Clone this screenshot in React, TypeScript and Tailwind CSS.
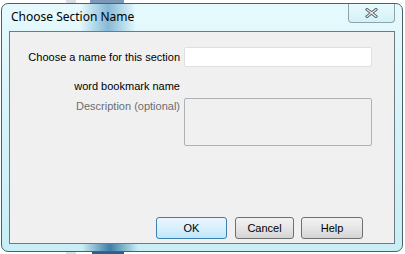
import React from "react";

const btnBase =
  "h-[22px] rounded-[3px] border text-[11px] text-black flex items-center justify-center";

export default function App() {
  return (
    <div
      className="w-[405px] h-[254px] bg-white overflow-hidden relative"
      style={{ fontFamily: '"Liberation Sans", Arial, sans-serif' }}
    >
      {/* background items behind window */}
      <div className="absolute left-[66px] top-0 w-[10px] h-[4px] bg-[#d8dde2]" />
      <div className="absolute left-[90px] top-0 w-[34px] h-[4px] bg-[#7d98b8]" />
      <div className="absolute left-[66px] bottom-0 w-[10px] h-[3px] bg-[#d8dde2]" />
      <div className="absolute left-[92px] bottom-0 w-[32px] h-[3px] bg-[#2f5f86]" />

      <div className="absolute left-[1px] top-[3px] w-[402px] h-[249px] rounded-[7px] border border-[#4f5f66] bg-gradient-to-b from-[#e6fafd] via-[#d4f3f9] to-[#c8eef6] overflow-hidden flex flex-col">
        {/* glass highlight */}
        <div className="absolute left-[78px] top-0 w-[56px] h-[30px] bg-gradient-to-r from-transparent via-[#86b9d6] to-transparent" />
        <div className="absolute left-[80px] bottom-0 w-[56px] h-[8px] bg-gradient-to-r from-transparent via-[#3f7fa6] to-transparent" />

        {/* title bar */}
        <div className="relative h-[27px] flex items-start">
          <span
            className="ml-[9px] mt-[5px] text-[12px] text-black leading-[16px]"
            style={{ fontFamily: '"Noto Sans", "Open Sans", sans-serif' }}
          >
            Choose Section Name
          </span>
          <div className="ml-auto mr-[7px] w-[47px] h-[20px] -mt-[1px] rounded-b-[4px] border border-[#8fa3ab] border-t-0 bg-gradient-to-b from-[#e9fbfd] to-[#d2f1f8] flex items-center justify-center">
            <svg width="13" height="10" viewBox="0 0 13 10">
              <path
                d="M2 1.5 L11 8.5 M11 1.5 L2 8.5"
                stroke="#5d6268"
                strokeWidth="3"
                strokeLinecap="square"
              />
              <path
                d="M2 1.5 L11 8.5 M11 1.5 L2 8.5"
                stroke="#f4f6f8"
                strokeWidth="1.1"
                strokeLinecap="square"
              />
            </svg>
          </div>
        </div>

        {/* client area */}
        <div className="relative mx-[7px] mb-[7px] flex-1 bg-[#f0f0f0] border border-[#6f7a7e] flex flex-col">
          <div className="flex mt-[15px] items-center">
            <div className="w-[173px] text-right text-[11px] text-black pr-[3px]">
              Choose a name for this section
            </div>
            <div className="w-[188px] h-[20px] bg-white border border-[#dcdfe3] rounded-[2px] ml-[1px]" />
          </div>
          <div className="flex mt-[13px]">
            <div className="w-[173px] text-right text-[11px] text-black pr-[3px] leading-[13px]">
              word bookmark name
            </div>
          </div>
          <div className="flex mt-[5px]">
            <div className="w-[173px] text-right text-[11px] text-[#6d6d6d] pr-[3px] leading-[13px] pt-[2px]">
              Description (optional)
            </div>
            <div className="w-[188px] h-[48px] bg-[#f0f0f0] border border-[#adb2b5] rounded-[2px] ml-[1px]" />
          </div>
          <div className="flex-1" />
          <div className="flex mb-[4px] ml-[146px]">
            <div
              className={`${btnBase} w-[71px] border-[#3c7fb1] bg-gradient-to-b from-[#eaf6fd] via-[#d9f0fc] to-[#bee6fd]`}
            >
              OK
            </div>
            <div
              className={`${btnBase} ml-[8px] w-[59px] border-[#707070] bg-gradient-to-b from-[#f2f2f2] via-[#e6e6e6] to-[#d4d4d4]`}
            >
              Cancel
            </div>
            <div
              className={`${btnBase} ml-[7px] w-[62px] border-[#707070] bg-gradient-to-b from-[#f2f2f2] via-[#e6e6e6] to-[#d4d4d4]`}
            >
              Help
            </div>
          </div>
        </div>
      </div>
    </div>
  );
}
